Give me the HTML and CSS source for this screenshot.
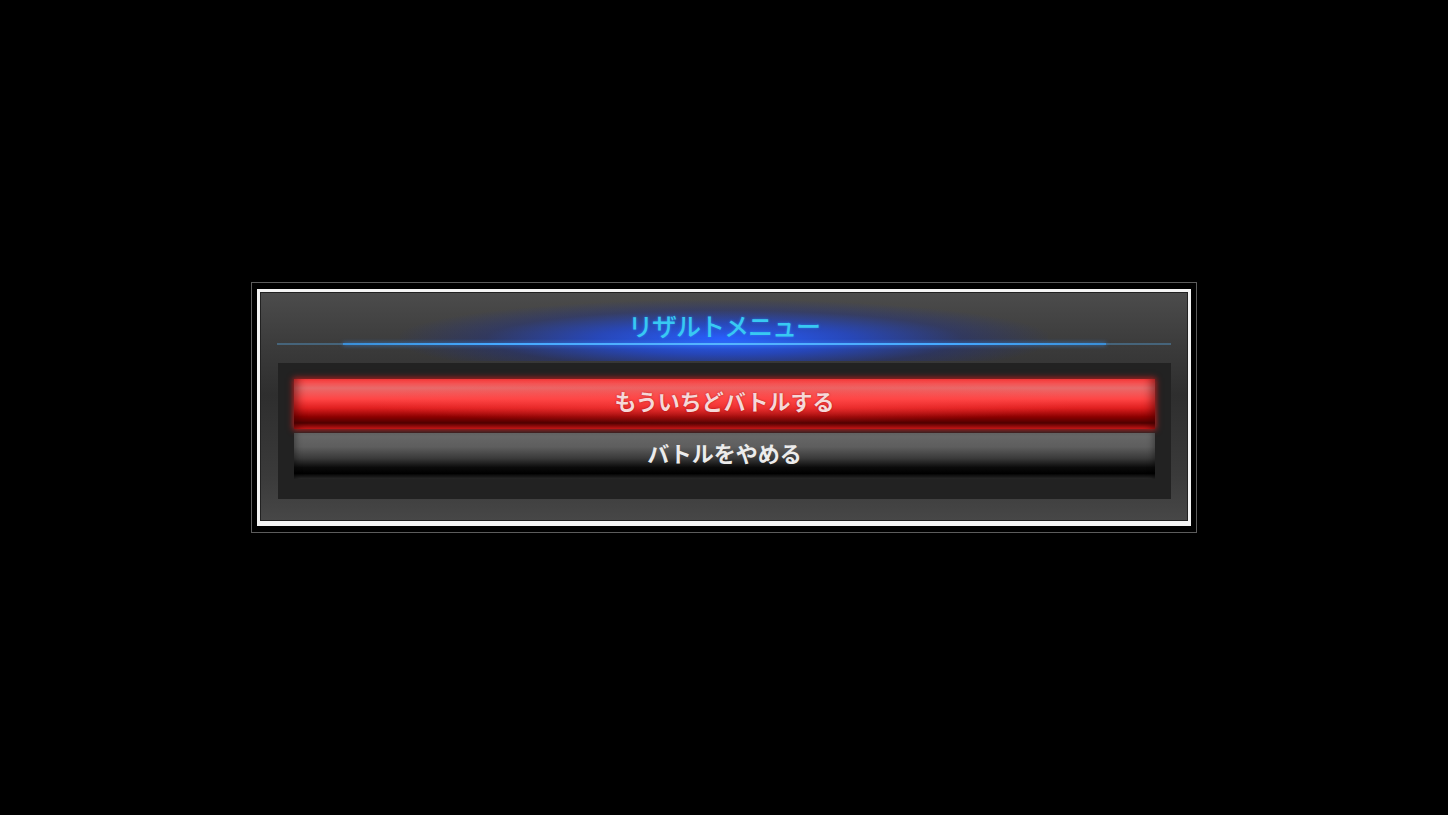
FILE: index.html
```html
<!DOCTYPE html>
<html>
<head>
    <meta http-equiv="Content-Type" content="text/html; charset=UTF-8">
    <link rel="stylesheet" href="styles.css">
</head>
<body>
    <div class="screen">
        <div class="frame">
            <div class="panel">
                <div class="title">
                    <span class="title-text">リザルトメニュー</span>
                </div>
                <div class="rule"><span class="rule-core"></span></div>
                <div class="menu">
                    <div class="item selected">もういちどバトルする</div>
                    <div class="item">バトルをやめる</div>
                </div>
            </div>
        </div>
    </div>
</body>
</html>
```

FILE: styles.css
```css
html, body {
    margin: 0;
    height: 100%;
    background: #000;
}

.screen {
    height: 100vh;
    display: flex;
    align-items: center;
    justify-content: center;
    font-family: "Noto Sans CJK JP", "Noto Sans", sans-serif;
}

.frame {
    border: 1px solid #5c5c5c;
    padding: 6px 5px;
    background: #000;
}

.panel {
    width: 928px;
    border: 3px solid #f4f4f4;
    border-bottom-width: 5px;
    box-shadow: inset 0 0 0 1px #222;
    background: linear-gradient(to bottom, #4c4c4c 0%, #3a3a3a 25%, #2e2e2e 45%, #3a3a3a 80%, #474747 100%);
    padding-bottom: 22px;
}

.title {
    position: relative;
    height: 51px;
    display: flex;
    align-items: center;
    justify-content: center;
    padding-top: 15px;
    box-sizing: border-box;
}

/* blue halo behind the heading */
.title::before {
    content: "";
    position: absolute;
    left: 140px;
    right: 140px;
    top: 8px;
    bottom: -18px;
    background: radial-gradient(ellipse at 50% 64%, rgba(40, 95, 255, 1) 0%, rgba(30, 75, 235, 0.7) 28%, rgba(20, 45, 170, 0.3) 52%, rgba(0, 0, 0, 0) 72%);
}

.title-text {
    position: relative;
    font-size: 25px;
    line-height: 30px;
    font-weight: 500;
    letter-spacing: -1px;
    color: #38c9f2;
    text-shadow: 0 0 3px rgba(40, 140, 255, 0.7);
}

.rule {
    position: relative;
    height: 2px;
    margin: 0 17px 0 17px;
    background: #46647a;
}

.rule-core {
    position: absolute;
    left: 66px;
    right: 65px;
    top: 0;
    bottom: 0;
    background: linear-gradient(to right, #3a8fd8 0%, #45a8ff 20%, #55b4ff 50%, #45a8ff 80%, #3a8fd8 100%);
    box-shadow: 0 0 4px rgba(60, 150, 255, 0.8);
}

.menu {
    margin: 18px 17px 0 18px;
    padding: 16px 16px 20px 16px;
    background: #222;
    display: flex;
    flex-direction: column;
    gap: 4px;
}

.item {
    height: 46px;
    padding-bottom: 9px;
    box-sizing: border-box;
    display: flex;
    align-items: center;
    justify-content: center;
    font-size: 22px;
    font-weight: 700;
    color: #ececec;
    background: linear-gradient(to bottom, #686868 0%, #5e5e5e 30%, #3a3a3a 55%, #0a0a0a 75%, #000 88%, #2c2c2c 100%);
    box-shadow: inset 6px 0 6px -4px rgba(0, 0, 0, 0.35), inset -6px 0 6px -4px rgba(0, 0, 0, 0.35);
}

.item.selected {
    height: 50px;
    color: #f6d8d8;
    background:
        radial-gradient(ellipse at 50% 45%, rgba(255, 70, 70, 0.55) 0%, rgba(255, 40, 40, 0) 60%),
        linear-gradient(to bottom, #ff3c3c 0%, #e86a6a 18%, #ff4545 40%, #e02020 58%, #8a0000 76%, #4e0000 88%, #d01818 100%);
    box-shadow: 0 0 6px 1px rgba(255, 30, 30, 0.7), inset 10px 0 8px -6px rgba(60, 0, 0, 0.5), inset -10px 0 8px -6px rgba(60, 0, 0, 0.5);
    text-shadow: 0 0 2px rgba(120, 0, 0, 0.6);
}
```
